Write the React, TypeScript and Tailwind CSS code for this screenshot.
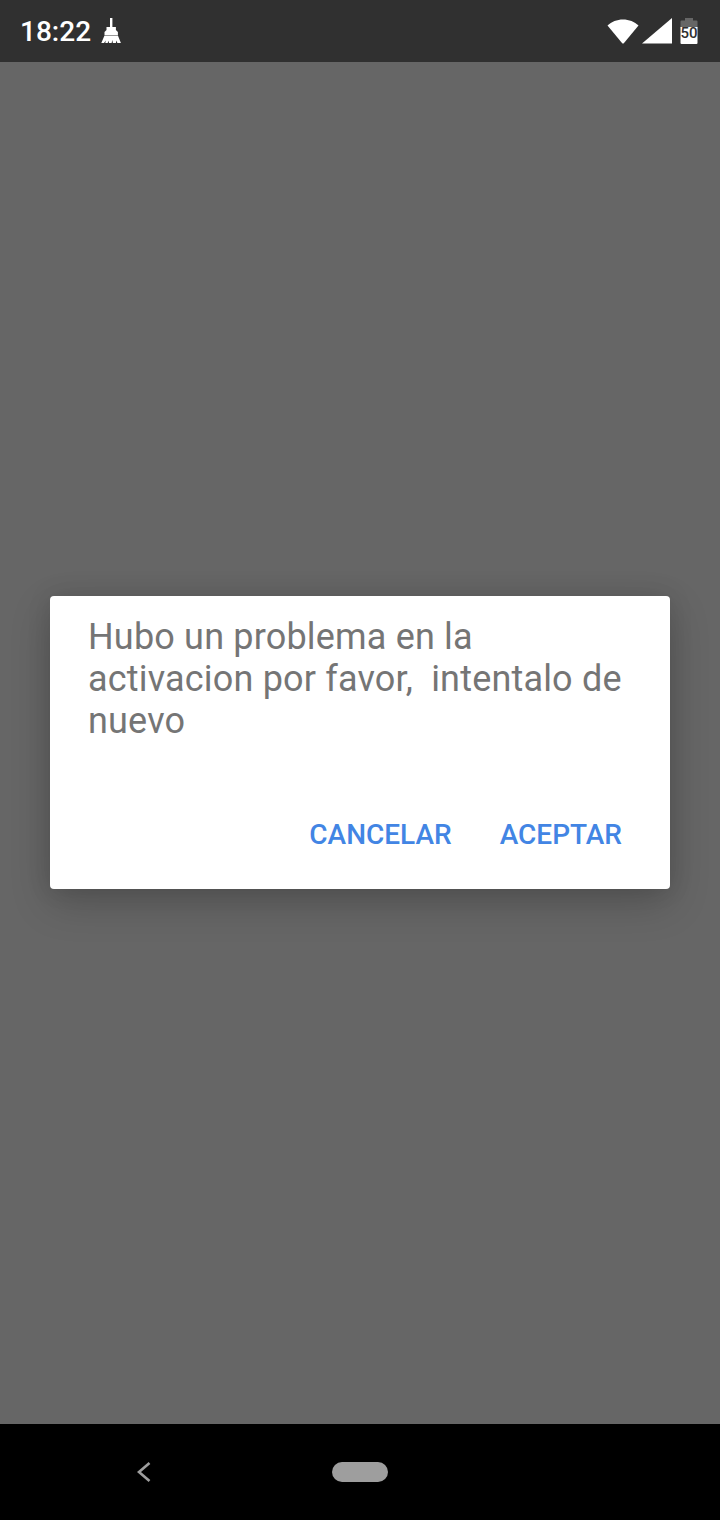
import React from 'react';

function BroomIcon() {
  return (
    <svg width="20" height="26" viewBox="0 0 20 26" fill="#fff" className="block">
      <rect x="9" y="0" width="2.400" height="9" />
      <path d="M5.500 9h9.400v3l2 2v3H3.500v-3l2-2z" />
      <path d="M3.500 17.500h13.400l3 7.500h-3.500l-1.200-2.500-.3 2.500h-3l-.6-3-.7 3H8l-.4-2.200-1 2.200H4.300l.5-2.500L3 25H.3z" />
    </svg>
  );
}

function StatusIcons() {
  return (
    <div className="flex items-center">
      <svg width="32" height="26" viewBox="0 0 32 26" className="block">
        <path d="M0.500 7.500C4.500 3.800 10 1.500 16 1.500s11.500 2.300 15.500 6L17 25a1.300 1.300 0 0 1-2 0z" fill="#fff" />
      </svg>
      <svg width="30" height="26" viewBox="0 0 30 26" className="block ml-[3px]">
        <path d="M0 25.500 L30 0 V25.500 Z" fill="#fff" />
      </svg>
      <svg width="18" height="26" viewBox="0 0 18 26" className="block ml-[8px]">
        <path d="M5 0h8v2.500h3.500a1 1 0 0 1 1 1V10H.5V3.500a1 1 0 0 1 1-1H5z" fill="#666" />
        <path d="M.5 9h17v16a1 1 0 0 1-1 1h-15a1 1 0 0 1-1-1z" fill="#fff" />
        <text x="9" y="20" textAnchor="middle" fontSize="15" fontWeight="500" fontFamily="Roboto, sans-serif" fill="#303030">50</text>
      </svg>
    </div>
  );
}

export default function App() {
  return (
    <div className="flex h-[1520px] w-[720px] flex-col bg-[#666666] font-['Roboto',sans-serif]">
      <div className="flex h-[62px] items-center justify-between bg-[#303030] pl-[20px] pr-[22px]">
        <div className="flex items-center gap-[10px]">
          <span className="pt-[2px] text-[28px] font-medium leading-none text-white">18:22</span>
          <BroomIcon />
        </div>
        <StatusIcons />
      </div>

      <div className="flex flex-1 items-center justify-center pb-[1px]">
        <div className="h-[293px] w-[620px] rounded-[4px] bg-white shadow-[0_14px_40px_rgba(0,0,0,0.2),0_0_24px_rgba(0,0,0,0.1)]">
          <p className="pl-[38px] pr-[40px] pt-[20px] text-[36px] leading-[42px] tracking-[0.18px] text-[#757575] whitespace-pre-wrap">
            {'Hubo un problema en la activacion por favor,  intentalo de nuevo'}
          </p>
          <div className="mt-[77px] flex justify-end gap-[48px] pr-[48px]">
            <button className="text-[28px] font-medium leading-[32px] text-[#4285e4]">CANCELAR</button>
            <button className="text-[28px] font-medium leading-[32px] text-[#4285e4]">ACEPTAR</button>
          </div>
        </div>
      </div>

      <div className="flex h-[96px] items-center bg-black">
        <svg width="14" height="20" viewBox="0 0 14 20" fill="none" className="ml-[137px] block">
          <path d="M12.500 1 L2 10 L12.500 19" stroke="#9e9e9e" strokeWidth="2.600" />
        </svg>
        <div className="ml-[181px] h-[20px] w-[56px] rounded-full bg-[#9e9e9e]" />
      </div>
    </div>
  );
}
